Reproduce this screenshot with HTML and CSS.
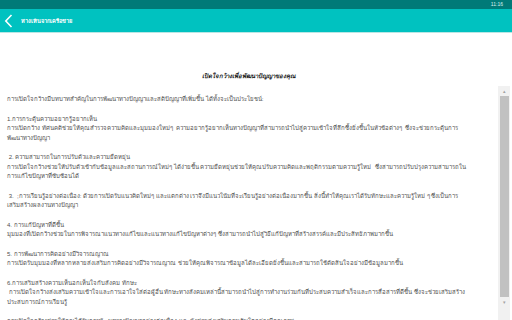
FILE: index.html
```html
<!DOCTYPE html>
<html>
<head>
    <meta charset="utf-8">
    <title>ห่างเหินเครือข่าย</title>
    <link rel="stylesheet" href="styles.css">
</head>
<body>
    <!-- แถบสถานะ -->
    <div class="status-bar">
        <span class="clock">11:16</span>
    </div>

    <!-- แถบหัวเรื่อง -->
    <div class="app-bar">
        <svg class="back-icon" width="9" height="14" viewBox="0 0 9 14">
            <path d="M7.5 1 L1.8 7 L7.5 13" fill="none" stroke="#ffffff" stroke-width="1.6"/>
        </svg>
        <span class="app-title">ห่างเหินจากเครือข่าย</span>
    </div>

    <div class="page">
        <div class="doc-title">เปิดใจกว้างเพื่อพัฒนาปัญญาของคุณ</div>

        <div class="reader">
            <div class="reader-text">
                <p>การเปิดใจกว้างมีบทบาทสำคัญในการพัฒนาทางปัญญาและสติปัญญาที่เพิ่มขึ้น ได้ทั้งจะเป็นประโยชน์:</p>

                <p>1.การกระตุ้นความอยากรู้อยากเห็น<br>
                การเปิดกว้าง ทัศนคติช่วยให้คุณสำรวจความคิดและมุมมองใหม่ๆ &nbsp;ความอยากรู้อยากเห็นทางปัญญาที่สามารถนำไปสู่ความเข้าใจที่ลึกซึ้งยิ่งขึ้นในหัวข้อต่างๆ &nbsp;ซึ่งจะช่วยกระตุ้นการ<br>
                พัฒนาทางปัญญา</p>

                <p>&nbsp;2. ความสามารถในการปรับตัวและความยืดหยุ่น<br>
                การเปิดใจกว้างช่วยให้ปรับตัวเข้ากับข้อมูลและสถานการณ์ใหม่ๆ ได้ง่ายขึ้น ความยืดหยุ่นช่วยให้คุณปรับความคิดและพฤติกรรมตามความรู้ใหม่ &nbsp;ซึ่งสามารถปรับปรุงความสามารถใน<br>
                การแก้ไขปัญหาที่ซับซ้อนได้</p>

                <p>&nbsp;3. &nbsp;;การเรียนรู้อย่างต่อเนื่อง: ด้วยการเปิดรับแนวคิดใหม่ๆ และแตกต่าง เราจึงมีแนวโน้มที่จะเรียนรู้อย่างต่อเนื่องมากขึ้น สิ่งนี้ทำให้คุณเราได้รับทักษะและความรู้ใหม่ ๆ ซึ่งเป็นการ<br>
                เสริมสร้างผลงานทางปัญญา</p>

                <p>4. การแก้ปัญหาที่ดีขึ้น<br>
                มุมมองที่เปิดกว้างช่วยในการพิจารณาแนวทางแก้ไขและแนวทางแก้ไขปัญหาต่างๆ ซึ่งสามารถนำไปสู่วิธีแก้ปัญหาที่สร้างสรรค์และมีประสิทธิภาพมากขึ้น</p>

                <p>5. การพัฒนาการคิดอย่างมีวิจารณญาณ<br>
                การเปิดรับมุมมองที่หลากหลายส่งเสริมการคิดอย่างมีวิจารณญาณ ช่วยให้คุณพิจารณาข้อมูลได้ละเอียดยิ่งขึ้นและสามารถใช้ตัดสินใจอย่างมีข้อมูลมากขึ้น</p>

                <p>6.การเสริมสร้างความเห็นอกเห็นใจกับสังคม ทักษะ<br>
                &nbsp;การเปิดใจกว้างส่งเสริมความเข้าใจและการเอาใจใส่ต่อผู้อื่น ทักษะทางสังคมเหล่านี้สามารถนำไปสู่การทำงานร่วมกันที่ประสบความสำเร็จและการสื่อสารที่ดีขึ้น ซึ่งจะช่วยเสริมสร้าง<br>
                ประสบการณ์การเรียนรู้</p>

                <p>การเปิดใจกว้างช่วยให้คุณได้รับการพัฒนาทางปัญญาอย่างต่อเนื่อง และยังช่วยส่งเสริมการเติบโตอย่างมีคุณภาพ</p>
            </div>

            <!-- แถบเลื่อน -->
            <div class="scrollbar">
                <span class="arrow">&#9652;</span>
                <div class="thumb"></div>
                <span class="arrow">&#9662;</span>
            </div>
        </div>
    </div>
</body>
</html>
```
FILE: styles.css
```css
:root {
    --teal-dark: #007a78;
    --teal: #00c2c0;
    --text: #505050;
}

html, body {
    margin: 0;
    padding: 0;
}

body {
    width: 512px;
    height: 320px;
    overflow: hidden;
    background: #ffffff;
    font-family: "Liberation Sans", "Noto Sans", sans-serif;
}

.status-bar {
    height: 9px;
    background: var(--teal-dark);
    display: flex;
    justify-content: flex-end;
    align-items: center;
    padding-right: 9px;
}

.clock {
    color: #d8f0ef;
    font-size: 5px;
    line-height: 9px;
}

.app-bar {
    height: 23px;
    background: var(--teal);
    display: flex;
    align-items: center;
    gap: 8px;
    padding-left: 4px;
    border-bottom: 1px solid #b9e6e4;
}

.back-icon {
    display: block;
}

.app-title {
    color: #ffffff;
    font-size: 5.6px;
    font-weight: bold;
}

.page {
    padding-top: 39px;
}

.doc-title {
    width: 498px;
    text-align: center;
    font-size: 6px;
    font-weight: bold;
    font-style: italic;
    color: #222222;
    line-height: 8px;
    margin-bottom: 6px;
}

.reader {
    display: flex;
    height: 240px;
}

.reader-text {
    flex: 1;
    overflow: hidden;
    padding: 9px 8px 0 7px;
    font-size: 6px;
    line-height: 9.5px;
    color: var(--text);
}

.reader-text p {
    margin: 0 0 10px 0;
    white-space: nowrap;
}

.scrollbar {
    width: 12px;
    margin-right: 2px;
    background: #f1f1f1;
    display: flex;
    flex-direction: column;
    align-items: center;
}

.arrow {
    font-size: 5px;
    line-height: 10px;
    color: #a3a3a3;
}

.thumb {
    width: 9px;
    height: 201px;
    background: #c1c1c1;
}
```
